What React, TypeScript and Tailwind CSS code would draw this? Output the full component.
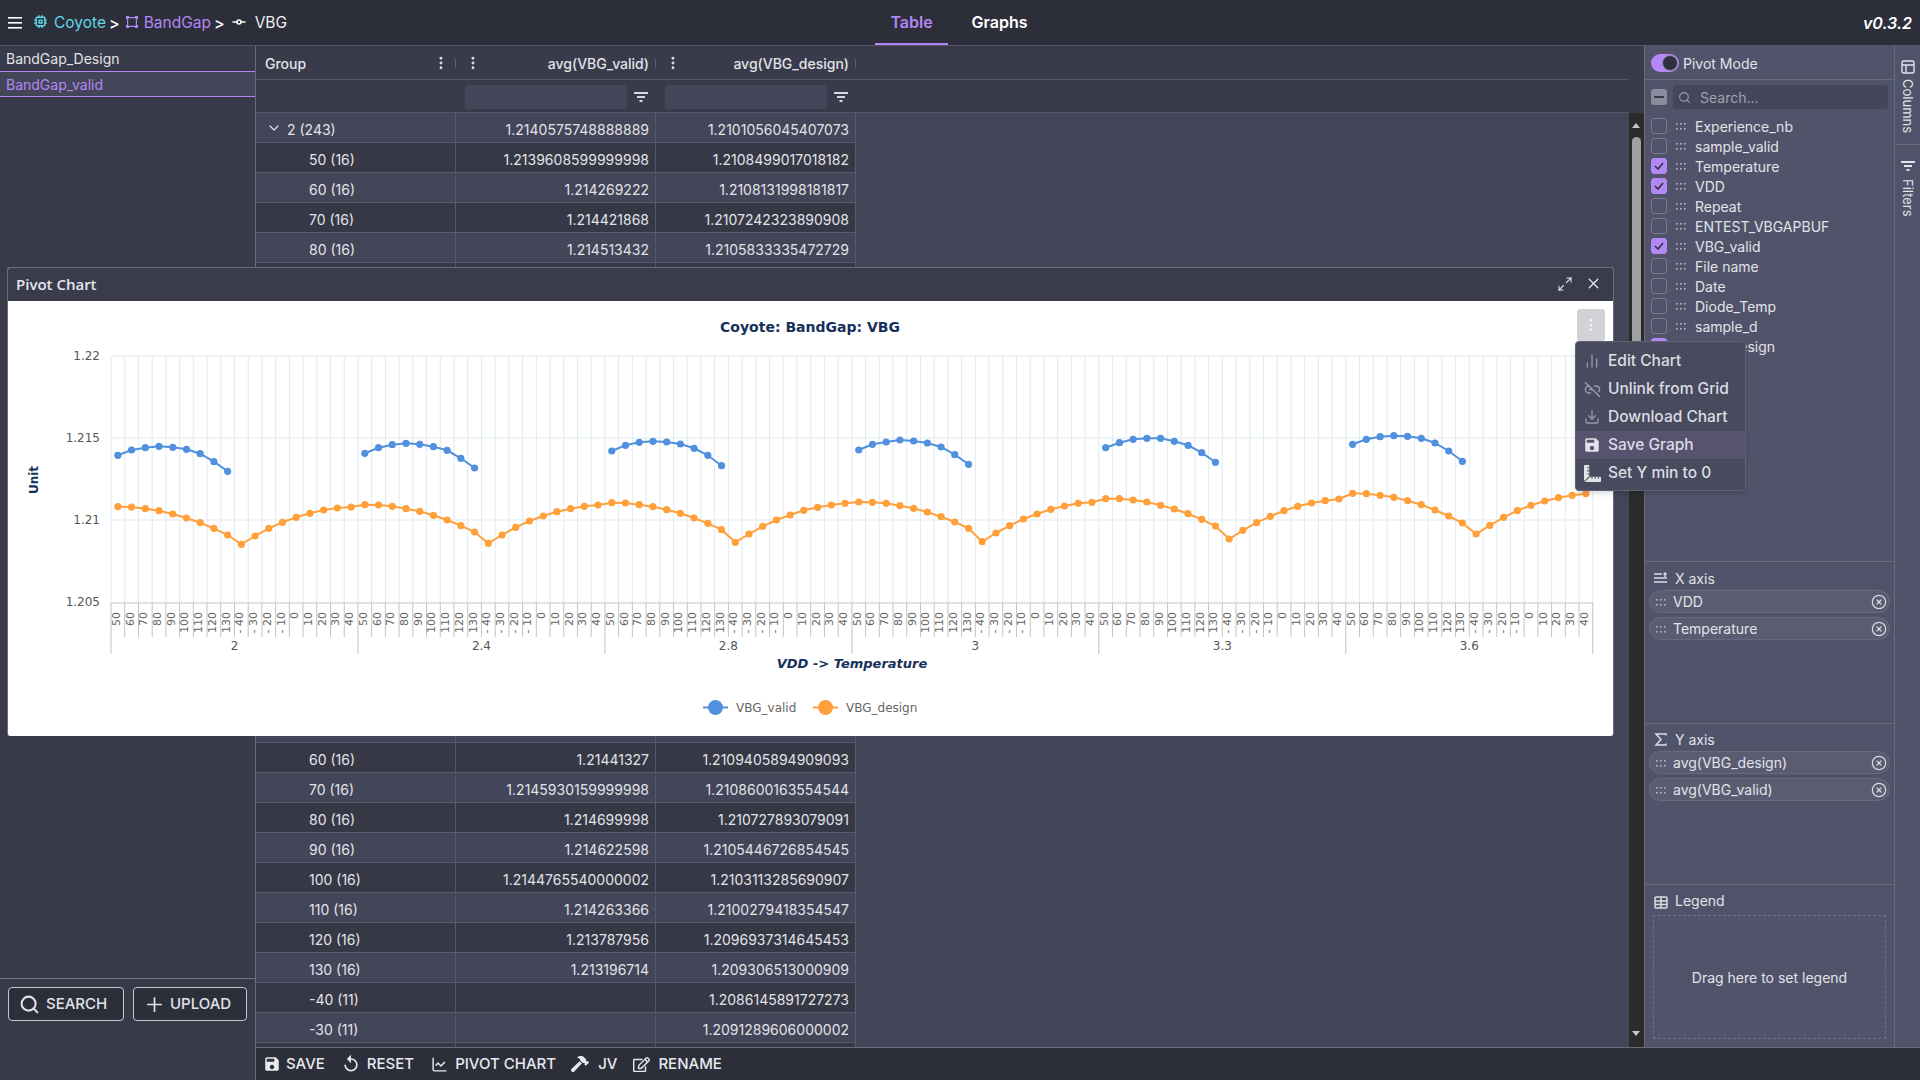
import React from "react";
import { ChevronDown, CircleX, Download, GitCommitHorizontal, ChartNoAxesColumn, Link2Off, Maximize2, X, Plus, Search, EllipsisVertical, ChartLine } from "lucide-react";
import { MdSave, MdReplay, MdMemory } from "react-icons/md";
import { FaHammer, FaRegEdit, FaRulerCombined } from "react-icons/fa";

const temps = ["50","60","70","80","90","100","110","120","130","- 40","- 30","- 20","- 10","0","10","20","30","40"];
const groups = ["2","2.4","2.8","3","3.3","3.6"];
const blue = [
  [455.3,450,447.7,446.3,447.3,449.3,453.7,461.7,471.3],
  [453.3,447.7,444.7,443.3,444.3,446.7,450.3,458.3,468],
  [451,445.3,442.3,441.3,442,444,448.3,455.3,465.7],
  [450,444.3,442,440,441,443,447,454.7,464.3],
  [447.7,442.7,439.3,438.3,438.3,441.3,445.3,452.7,462.3],
  [444.3,439.3,436.7,435.7,436.3,438.3,443,451,461.3],
];
const orange = [
  506.7,507,508.7,510.7,514,518,522.7,528.3,535,544.3,536,528.3,522.3,517.3,513.3,510,508,507,
  504.7,505,506.3,508.7,511.3,515.3,520,525.7,532,543.3,535,527.3,521,516,511.7,508.7,506.3,505,
  502.7,503,504.7,506.7,509.7,513.3,518,523.3,529.7,542.3,534,526.3,520,515,510.3,507.3,505,503.3,
  502,502.3,503.3,505.7,508.3,512,516.7,522,528.3,541.7,533,525.7,519,514,509.3,506,503.3,502.3,
  498.7,498.7,500,502,505.3,509,513.7,519.3,526,539,530.3,522.7,516.3,510.7,506.3,503,500.7,499,
  493.3,493.7,495.3,497.3,500.7,504.7,510,516,523,534,525.3,517.3,510.7,505.3,501,497.7,495.3,493.7,
];
const step = 13.72;
const x0 = 111;
const cx = (i: number) => x0 + step * (i + 0.5);
const DV = "'DejaVu Sans', sans-serif";

function Chart() {
  const ticks = Array.from({ length: 109 }, (_, i) => i);
  const labels = Array.from({ length: 108 }, (_, i) => temps[i % 18]);
  return (
    <svg viewBox="8 301 1605 435" width="1605" height="435" className="block">
      {ticks.map((i) => (
        <line key={i} x1={x0 + step * i} x2={x0 + step * i} y1={356} y2={603} stroke="#e0eaf1" strokeWidth="1" />
      ))}
      {[356, 438, 520].map((y) => (
        <line key={y} x1={x0} x2={1593} y1={y} y2={y} stroke="#e0eaf1" strokeWidth="1" />
      ))}
      <line x1={x0} x2={1593} y1={603} y2={603} stroke="#c3c3c3" strokeWidth="1" />
      {ticks.map((i) => (
        <line key={i} x1={x0 + step * i} x2={x0 + step * i} y1={603} y2={i % 18 === 0 ? 654 : 637} stroke="#c3c3c3" strokeWidth="1" />
      ))}
      {[["1.22", 360], ["1.215", 442], ["1.21", 524], ["1.205", 606]].map(([t, y]) => (
        <text key={t} x={100} y={(y as number) - 0.5} textAnchor="end" fontFamily={DV} fontSize="12" fill="#555">{t}</text>
      ))}
      {labels.map((t, i) => (
        <text key={i} transform={`translate(${cx(i) + 2},612) rotate(-90)`} textAnchor="end" fontFamily={DV} fontSize="11" fill="#666">{t}</text>
      ))}
      {groups.map((g, i) => (
        <text key={g} x={x0 + step * 18 * (i + 0.5)} y={650} textAnchor="middle" fontFamily={DV} fontSize="12" fill="#555">{g}</text>
      ))}
      <text x={810} y={332} textAnchor="middle" fontFamily={DV} fontSize="14" fontWeight="700" fill="#15305a">Coyote: BandGap: VBG</text>
      <text transform="translate(38,480) rotate(-90)" textAnchor="middle" fontFamily={DV} fontSize="12" fontWeight="700" fill="#15305a">Unit</text>
      <text x={852} y={668} textAnchor="middle" fontFamily={DV} fontSize="13" fontWeight="700" fontStyle="italic" fill="#15305a">VDD -&gt; Temperature</text>
      {blue.map((g, k) => (
        <g key={k}>
          <polyline points={g.map((y, j) => `${cx(k * 18 + j)},${y}`).join(" ")} fill="none" stroke="#5090dc" strokeWidth="2" />
          {g.map((y, j) => <circle key={j} cx={cx(k * 18 + j)} cy={y} r="3.6" fill="#5090dc" />)}
        </g>
      ))}
      <polyline points={orange.map((y, i) => `${cx(i)},${y}`).join(" ")} fill="none" stroke="#ffa03a" strokeWidth="2" />
      {orange.map((y, i) => <circle key={i} cx={cx(i)} cy={y} r="3.6" fill="#ffa03a" />)}
      <line x1={703} x2={728} y1={707.5} y2={707.5} stroke="#5090dc" strokeWidth="2" />
      <circle cx={715.5} cy={707.5} r={7.5} fill="#5090dc" />
      <text x={736} y={711.5} fontFamily={DV} fontSize="12" fill="#666">VBG_valid</text>
      <line x1={813} x2={838} y1={707.5} y2={707.5} stroke="#ffa03a" strokeWidth="2" />
      <circle cx={825.5} cy={707.5} r={7.5} fill="#ffa03a" />
      <text x={846} y={711.5} fontFamily={DV} fontSize="12" fill="#666">VBG_design</text>
    </svg>
  );
}

function Grip({ className = "" }: { className?: string }) {
  return (
    <svg width="12" height="8" viewBox="0 0 12 8" className={className} fill="#b4b5c0">
      {[1, 5, 9].map((x) => [1, 6].map((y) => <rect key={`${x}${y}`} x={x} y={y} width="1.6" height="1.6" />))}
    </svg>
  );
}

function FilterIcon({ className = "" }: { className?: string }) {
  return (
    <svg width="14" height="12" viewBox="0 0 14 12" className={className} fill="#d8d9e0">
      <rect x="0" y="1" width="14" height="2" />
      <rect x="3" y="5" width="8" height="2" />
      <rect x="5.5" y="9" width="3" height="2" />
    </svg>
  );
}

function Dots() {
  return <EllipsisVertical size={16} strokeWidth={2.4} className="text-[#dcdde3]" />;
}

const cols: [string, boolean][] = [
  ["Experience_nb", false], ["sample_valid", false], ["Temperature", true], ["VDD", true], ["Repeat", false],
  ["ENTEST_VBGAPBUF", false], ["VBG_valid", true], ["File name", false], ["Date", false], ["Diode_Temp", false],
  ["sample_d", false], ["VBG_design", true],
];

type Row = [string, string, string, boolean?];
const hidden: Row[] = Array.from({ length: 16 }, (): Row => ["", "", ""]);
const rows: Row[] = [
  ["2 (243)", "1.2140575748888889", "1.2101056045407073", true],
  ["50 (16)", "1.2139608599999998", "1.2108499017018182"],
  ["60 (16)", "1.214269222", "1.2108131998181817"],
  ["70 (16)", "1.214421868", "1.2107242323890908"],
  ["80 (16)", "1.214513432", "1.2105833335472729"],
  ...hidden,
  ["60 (16)", "1.21441327", "1.2109405894909093"],
  ["70 (16)", "1.2145930159999998", "1.2108600163554544"],
  ["80 (16)", "1.214699998", "1.210727893079091"],
  ["90 (16)", "1.214622598", "1.2105446726854545"],
  ["100 (16)", "1.2144765540000002", "1.2103113285690907"],
  ["110 (16)", "1.214263366", "1.2100279418354547"],
  ["120 (16)", "1.213787956", "1.2096937314645453"],
  ["130 (16)", "1.213196714", "1.209306513000909"],
  ["-40 (11)", "", "1.2086145891727273"],
  ["-30 (11)", "", "1.2091289606000002"],
  ["", "", ""],
];

function Chip({ label }: { label: string }) {
  return (
    <div className="flex h-[23px] shrink-0 items-center rounded-full border border-[#686a7e] bg-[#5a5c71] pl-[5px] pr-[2px] text-[14px] text-[#e2e3e8]">
      <Grip className="mr-[6px]" />
      <span className="flex-1">{label}</span>
      <CircleX size={16} strokeWidth={1.8} className="text-[#d8d9df]" />
    </div>
  );
}

function MenuItem({ icon, label, active }: { icon: React.ReactNode; label: string; active?: boolean }) {
  return (
    <div className={`flex h-[28px] items-center pl-[4px] ${active ? "bg-[#57536f]" : ""}`}>
      <span className="flex w-[24px] justify-center">{icon}</span>
      <span className="ml-[4px] text-[15.5px] font-medium text-[#dcdde3]">{label}</span>
    </div>
  );
}

export default function App() {
  return (
    <div className="relative flex h-[1080px] w-[1920px] flex-col overflow-hidden bg-[#383a49] font-['Inter',sans-serif] text-[14px] text-[#e2e3e8]">
      <header className="flex h-[46px] items-center border-b border-[#55576a] bg-[#2c2e3a] pl-[8px] pr-[8px]">
        <svg width="14" height="12" viewBox="0 0 14 12" className="shrink-0" fill="#fff">
          <rect y="0" width="14" height="1.6" /><rect y="5" width="14" height="1.6" /><rect y="10" width="14" height="1.6" />
        </svg>
        <MdMemory size={17} className="ml-[10px] -translate-y-[1px] text-[#5fd9e8]" />
        <span className="ml-[5px] text-[15.5px] text-[#5fd9e8]">Coyote</span>
        <span className="ml-[3px] text-[16px] font-medium text-white">&gt;</span>
        <svg width="12" height="12" viewBox="0 0 12 12" className="ml-[6px] -translate-y-[1px] text-[#b388f5]" fill="currentColor">
          <path fillRule="evenodd" d="M0 0h3v1h6V0h3v3h-1v6h1v3H9v-1H3v1H0V9h1V3H0zM2.2 2.2v7.6h7.6V2.2z" />
        </svg>
        <span className="ml-[6px] text-[15.5px] text-[#b388f5]">BandGap</span>
        <span className="ml-[3px] text-[16px] font-medium text-white">&gt;</span>
        <GitCommitHorizontal size={16} strokeWidth={2.2} className="ml-[6px] -translate-y-[1px] text-white" />
        <span className="ml-[8px] text-[15.5px] text-[#eeeef2]">VBG</span>
        <div className="ml-[588px] flex h-full gap-[15px]">
          <div className="flex w-[73px] items-center justify-center border-b-2 border-[#b388f5] text-[16px] font-semibold text-[#b388f5]">Table</div>
          <div className="flex w-[73px] items-center justify-center pb-[2px] text-[16px] font-semibold text-white">Graphs</div>
        </div>
        <span className="ml-auto text-[16px] font-semibold italic text-white">v0.3.2</span>
      </header>

      <div className="flex min-h-0 flex-1">
        <aside className="flex w-[256px] shrink-0 flex-col border-r border-[#6a6c7c] bg-[#383a49]">
          <div className="flex h-[26px] items-center border-b border-[#b388f5] pl-[6px]">BandGap_Design</div>
          <div className="flex h-[25px] items-center border-b border-[#b388f5] bg-[#434558] pl-[6px] text-[#b388f5]">BandGap_valid</div>
          <div className="flex-1" />
          <div className="flex h-[102px] gap-[9px] border-t border-[#75767f] pl-[8px] pt-[8px]">
            <button className="flex h-[34px] w-[116px] items-center gap-[6px] rounded-[4px] border border-[#c8c8cc] bg-[#2c2e3a] pl-[10px] text-[15px] font-medium">
              <Search size={21} strokeWidth={2.3} />SEARCH
            </button>
            <button className="flex h-[34px] w-[114px] items-center gap-[4px] rounded-[4px] border border-[#c8c8cc] bg-[#2c2e3a] pl-[9px] text-[15px] font-medium">
              <Plus size={23} strokeWidth={1.8} />UPLOAD
            </button>
          </div>
        </aside>

        <div className="flex min-w-0 flex-1 flex-col">
          <div className="flex min-h-0 flex-1">
            <main className="flex w-[1373px] shrink-0 flex-col bg-[#434558]">
              <div className="flex h-[34px] shrink-0 items-center border-b border-[#55576a] bg-[#393b4b]">
                <div className="relative flex h-full w-[200px] items-center pl-[9px] pt-[2px] font-medium">
                  Group
                  <span className="absolute right-[7px] top-[9px]"><Dots /></span>
                  <span className="absolute right-0 top-[13px] h-[9px] w-px bg-[#5f6173]" />
                </div>
                <div className="relative flex h-full w-[200px] items-center justify-end pr-[7px] pt-[2px] font-medium">
                  <span className="absolute left-[9px] top-[9px]"><Dots /></span>
                  avg(VBG_valid)
                  <span className="absolute right-0 top-[13px] h-[9px] w-px bg-[#5f6173]" />
                </div>
                <div className="relative flex h-full w-[200px] items-center justify-end pr-[7px] pt-[2px] font-medium">
                  <span className="absolute left-[9px] top-[9px]"><Dots /></span>
                  avg(VBG_design)
                  <span className="absolute right-0 top-[13px] h-[9px] w-px bg-[#5f6173]" />
                </div>
              </div>
              <div className="flex h-[33px] shrink-0 items-center border-b border-[#55576a] bg-[#393b4b] pt-[1px]">
                <div className="w-[200px]" />
                <div className="flex w-[200px] items-center pl-[9px]">
                  <div className="h-[24px] w-[162px] rounded-[3px] bg-[#44465a]" />
                  <FilterIcon className="ml-[7px]" />
                </div>
                <div className="flex w-[200px] items-center pl-[9px]">
                  <div className="h-[24px] w-[162px] rounded-[3px] bg-[#44465a]" />
                  <FilterIcon className="ml-[7px]" />
                </div>
              </div>
              <div className="min-h-0 flex-1 overflow-hidden">
                {rows.map((r, i) => (
                  <div key={i} className={`flex h-[30px] w-[600px] items-center border-b border-r border-[#5a5c6e] ${i % 2 ? "bg-[#363846]" : "bg-[#434558]"}`}>
                    <div className={`flex h-full w-[200px] items-center border-r border-[#55576a] pt-[4px] ${r[3] ? "pl-[10px]" : "pl-[53px]"}`}>
                      {r[3] && <ChevronDown size={16} strokeWidth={1.8} className="mr-[5px] -translate-y-[2px] text-[#dcdde3]" />}
                      {r[0]}
                    </div>
                    <div className="flex h-full w-[200px] items-center justify-end border-r border-[#55576a] pr-[6px] pt-[4px]">{r[1]}</div>
                    <div className="flex h-full w-[199px] items-center justify-end pr-[6px] pt-[4px]">{r[2]}</div>
                  </div>
                ))}
              </div>
            </main>

            <div className="flex w-[15px] shrink-0 flex-col">
              <div className="h-[67px] bg-[#393b4b]" />
              <div className="relative flex-1 bg-[#2b2b2b]">
                <div className="absolute left-[3px] top-[24px] h-[283px] w-[9px] rounded-[5px] bg-[#a0a0a0]" />
                <div className="absolute left-[3px] top-[10px] h-0 w-0 border-x-[4.5px] border-b-[5px] border-x-transparent border-b-[#c8c8c8]" />
                <div className="absolute bottom-[11px] left-[3px] h-0 w-0 border-x-[4.5px] border-t-[5px] border-x-transparent border-t-[#c8c8c8]" />
              </div>
            </div>

            <section className="flex w-[251px] shrink-0 flex-col border-r border-l border-[#686a7e] bg-[#50536a]">
              <div className="flex h-[34px] shrink-0 items-center border-b border-[#686a7e] pl-[6px] pt-[1px]">
                <div className="flex h-[18px] w-[28px] items-center justify-end rounded-full bg-[#b388f5] pr-[1px]">
                  <div className="h-[16px] w-[16px] rounded-full border border-[#8e8fa0] bg-[#2f3140]" />
                </div>
                <span className="ml-[4px]">Pivot Mode</span>
              </div>
              <div className="relative flex h-[33px] shrink-0 items-center pl-[6px] pt-[1px]">
                <div className="flex h-[16px] w-[16px] items-center justify-center rounded-[3px] bg-[#8a8c9c]">
                  <div className="h-[2px] w-[10px] bg-[#3a3c4c]" />
                </div>
                <div className="ml-[6px] flex h-[24px] w-[215px] items-center rounded-[3px] bg-[#44465a] pl-[5px] text-[#a0a2b1]">
                  <Search size={13} strokeWidth={2} />
                  <span className="ml-[9px]">Search...</span>
                </div>
              </div>
              <div className="flex h-[449px] shrink-0 flex-col border-b border-[#686a7e] pt-[3px]">
                {cols.map(([n, c]) => (
                  <div key={n} className="flex h-[20px] shrink-0 items-center pl-[6px]">
                    <div className={`flex h-[16px] w-[16px] items-center justify-center rounded-[3px] border ${c ? "border-[#b388f5] bg-[#b388f5]" : "border-[#787a8e]"}`}>
                      {c && (
                        <svg width="10" height="8" viewBox="0 0 10 8" fill="none" stroke="#2f3140" strokeWidth="1.6"><path d="M1 4l3 3 5-6" /></svg>
                      )}
                    </div>
                    <Grip className="ml-[8px]" />
                    <span className="ml-[8px] text-[#e2e3e8]">{n}</span>
                  </div>
                ))}
              </div>
              <div className="flex h-[162px] shrink-0 flex-col gap-[4px] border-b border-[#686a7e] px-[4px]">
                <div className="flex h-[24px] shrink-0 items-center pl-[5px] pt-[8px]">
                  <svg width="14" height="12" viewBox="0 0 14 12" fill="none" stroke="#dcdde3" strokeWidth="1.4"><path d="M0 2h8M0 6h13M0 10h13M11 5V1M9.5 2.5L11 1l1.5 1.5" /></svg>
                  <span className="ml-[7px]">X axis</span>
                </div>
                <Chip label="VDD" />
                <Chip label="Temperature" />
              </div>
              <div className="flex h-[161px] shrink-0 flex-col gap-[4px] border-b border-[#686a7e] px-[4px]">
                <div className="flex h-[23px] shrink-0 items-center pl-[5px] pt-[7px]">
                  <svg width="14" height="13" viewBox="0 0 14 13" fill="none" stroke="#dcdde3" strokeWidth="1.5"><path d="M12 2.5V1H2l5 5.5L2 12h10v-1.5" /></svg>
                  <span className="ml-[7px]">Y axis</span>
                </div>
                <Chip label="avg(VBG_design)" />
                <Chip label="avg(VBG_valid)" />
              </div>
              <div className="flex flex-1 flex-col px-[8px]">
                <div className="flex h-[26px] shrink-0 items-end pl-[1px]">
                  <svg width="14" height="13" viewBox="0 0 14 13" className="mb-[2px]" fill="none" stroke="#dcdde3" strokeWidth="1.5"><rect x="1" y="1" width="12" height="11" rx="1" /><path d="M1 5h12M1 8.5h12M7 1v11" /></svg>
                  <span className="ml-[7px]">Legend</span>
                </div>
                <div className="mt-[4px] flex h-[124px] w-[233px] items-center justify-center border border-dashed border-[#6f7186] text-[#e2e3e8]">Drag here to set legend</div>
              </div>
            </section>

            <nav className="flex w-[25px] shrink-0 flex-col bg-[#50536a] text-[13px]">
              <div className="flex h-[99px] flex-col items-center border-b border-[#686a7e] pt-[14px]">
                <svg width="14" height="14" viewBox="0 0 14 14" fill="none" stroke="#e2e3e8" strokeWidth="1.4"><rect x="1" y="1" width="12" height="12" rx="1.5" /><path d="M1 5h12M5 5v8" /></svg>
                <span className="mt-[5px] [writing-mode:vertical-rl]">Columns</span>
              </div>
              <div className="flex flex-col items-center pt-[16px]">
                <svg width="14" height="12" viewBox="0 0 14 12" fill="#e2e3e8"><rect y="0" width="14" height="2" /><rect x="3" y="4" width="8" height="2" /><rect x="5.5" y="8" width="3" height="2" /></svg>
                <span className="mt-[6px] [writing-mode:vertical-rl]">Filters</span>
              </div>
            </nav>
          </div>

          <footer className="flex h-[33px] shrink-0 items-center border-t border-[#6a6c7c] bg-[#2c2e3a] pl-[7px] text-[15px] font-medium text-[#e8e9ee]">
            <MdSave size={18} /><span className="ml-[5px]">SAVE</span>
            <MdReplay size={20} className="ml-[16px]" /><span className="ml-[6px]">RESET</span>
            <ChartLine size={17} strokeWidth={2} className="ml-[17px]" /><span className="ml-[7px]">PIVOT CHART</span>
            <FaHammer size={18} className="ml-[15px]" /><span className="ml-[9px]">JV</span>
            <FaRegEdit size={17} className="ml-[16px]" /><span className="ml-[8px]">RENAME</span>
          </footer>
        </div>
      </div>

      <div className="absolute left-[7px] top-[267px] h-[469px] w-[1607px] overflow-hidden rounded-[3px] border-x border-t border-[#6a6c7c] bg-white">
        <div className="flex h-[33px] items-center bg-[#3a3c4c] pl-[8px] pr-[11px] font-['Open_Sans',sans-serif] text-[15px] font-semibold text-[#e6e7ec]">
          Pivot Chart
          <Maximize2 size={16} strokeWidth={1.6} className="ml-auto -translate-y-[1px] text-[#e8e9ee]" />
          <X size={17} strokeWidth={1.8} className="ml-[12px] -translate-y-[1px] text-[#e8e9ee]" />
        </div>
        <Chart />
      </div>

      <div className="absolute left-[1577px] top-[309px] flex h-[32px] w-[28px] items-center justify-center rounded-[3px] bg-[#d2d2d6]">
        <EllipsisVertical size={16} strokeWidth={2.2} className="text-[#f2f2f4]" />
      </div>

      <div className="absolute left-[1575px] top-[341px] h-[150px] w-[171px] rounded-[4px] border border-[#5f6174] bg-[#484a5e] pt-[5px] shadow-md">
        <MenuItem icon={<ChartNoAxesColumn size={16} className="text-[#9a9cab]" />} label="Edit Chart" />
        <MenuItem icon={<Link2Off size={17} className="text-[#9a9cab]" />} label="Unlink from Grid" />
        <MenuItem icon={<Download size={16} className="text-[#9a9cab]" />} label="Download Chart" />
        <MenuItem icon={<MdSave size={18} className="text-[#e2e3e8]" />} label="Save Graph" active />
        <MenuItem icon={<FaRulerCombined size={17} className="text-[#e2e3e8]" />} label="Set Y min to 0" />
      </div>
    </div>
  );
}
